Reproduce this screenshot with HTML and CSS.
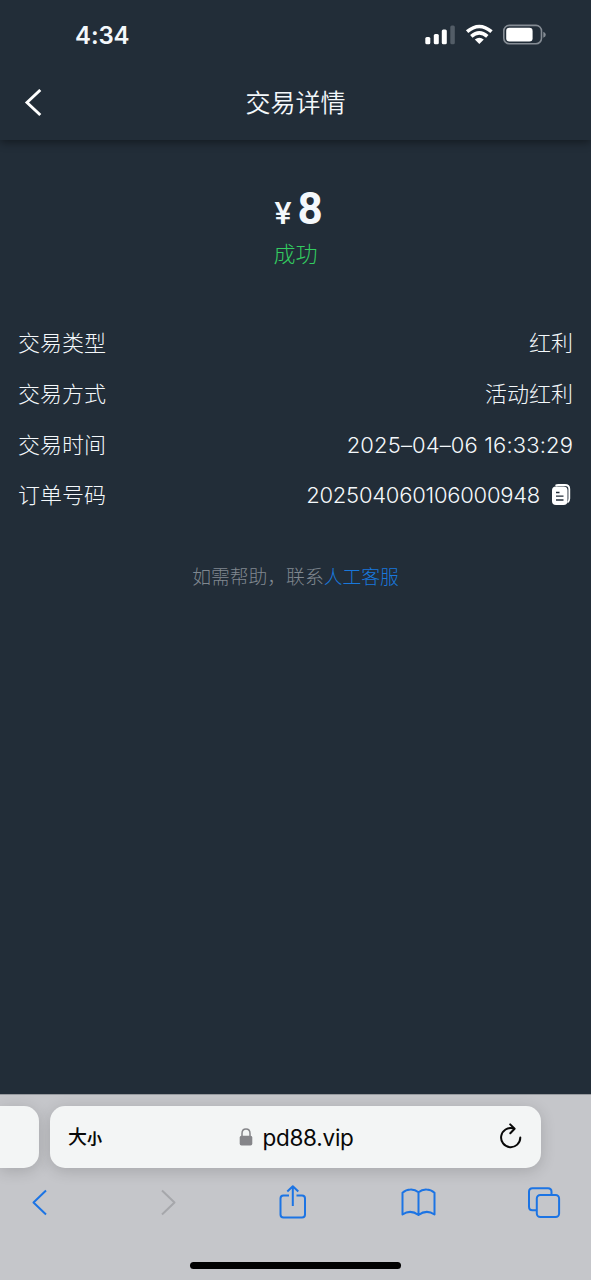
FILE: index.html
```html
<!DOCTYPE html>
<html lang="zh-CN">
<head>
<meta charset="utf-8">
<title>交易详情</title>
<link rel="stylesheet" href="styles.css">
</head>
<body>
<div class="screen">
  <header class="header">
    <div class="status">
      <span class="clock">4:34</span>
      <svg class="status-icons" width="122" height="24" viewBox="0 0 122 24">
        <g fill="#fff">
          <rect x="1.300" y="13" width="5" height="7.300" rx="1.500"/>
          <rect x="9.800" y="10" width="5" height="10.300" rx="1.500"/>
          <rect x="17.800" y="5.500" width="5" height="14.800" rx="1.500"/>
          <rect x="26.300" y="1.500" width="4.500" height="18.800" rx="1.500" fill="#535d67"/>
          <path d="M55.300 20 L50.800 15.600 Q55.300 12 59.800 15.600 Z"/>
        </g>
        <g fill="none" stroke="#fff" stroke-width="3.600">
          <path d="M43.100 7.700 Q55.300 -2.700 67.500 7.700"/>
          <path d="M47.300 12.300 Q55.300 5.300 63.300 12.300"/>
        </g>
        <rect x="79.800" y="1.400" width="37.700" height="18.400" rx="5.500" fill="none" stroke="#858c94" stroke-width="1.600"/>
        <rect x="82.200" y="3.800" width="26.400" height="13.600" rx="3.200" fill="#fff"/>
        <path d="M119.300 7.700 Q121.800 8.500 121.800 10.700 Q121.800 12.900 119.300 13.700 Z" fill="#858c94"/>
      </svg>
    </div>
    <nav class="nav">
      <svg class="back" width="18" height="28" viewBox="0 0 18 28" fill="none" stroke="#fff" stroke-width="2.900"><path d="M16.300 1 L3 13.500 L16.300 26"/></svg>
      <h1 class="title">交易详情</h1>
    </nav>
  </header>
  <main class="content">
    <div class="amount"><span class="currency">¥</span><span class="value">8</span></div>
    <div class="result">成功</div>
    <dl class="details">
      <div class="row"><dt>交易类型</dt><dd>红利</dd></div>
      <div class="row"><dt>交易方式</dt><dd>活动红利</dd></div>
      <div class="row"><dt>交易时间</dt><dd class="time">2025–04–06 16:33:29</dd></div>
      <div class="row"><dt>订单号码</dt><dd class="order"><span>202504060106000948</span>
        <svg width="19" height="22" viewBox="0 0 19 22">
          <path d="M3.500 1.700 Q4.500 1 6.500 1 H13 Q17.300 1 17.300 5 V14.500 Q17.300 17.500 15.500 18.500" fill="none" stroke="#fff" stroke-width="1.800"/>
          <rect x="0" y="2.600" width="15.500" height="18.400" rx="4" fill="#fff"/>
          <path d="M4 8.500 H7.500 M4 12.200 H11.500 M4 16 H11.500" stroke="#222c38" stroke-width="1.300"/>
        </svg></dd></div>
    </dl>
    <p class="help">如需帮助，联系<a class="link">人工客服</a></p>
  </main>
  <footer class="browser">
    <div class="tabs">
      <div class="tab-prev"></div>
      <div class="address">
        <span class="size"><b class="big">大</b><b class="small">小</b></span>
        <span class="site">
          <svg width="14" height="18" viewBox="0 0 14 18"><path d="M3 9 V5.500 Q3 1 7 1 Q11 1 11 5.500 V9" fill="none" stroke="#858589" stroke-width="1.500"/><rect x=".7" y="7.800" width="12.600" height="9.800" rx="1.800" fill="#858589"/></svg>
          <span class="domain">pd88.vip</span>
        </span>
        <svg class="reload" width="24" height="28" viewBox="0 0 24 28" fill="none" stroke="#080808" stroke-width="2" stroke-linecap="round" stroke-linejoin="round"><path d="M14.200 5.300 A9.600 9.600 0 1 0 21.300 14.500"/><path d="M11.200 1.400 L15.600 5.700 L11.300 10.200"/></svg>
      </div>
    </div>
    <div class="toolbar">
      <svg width="36" height="36" viewBox="0 0 36 36"><path d="M24 6.500 L11.500 18.500 L24 30.500"/></svg>
      <svg class="disabled" width="36" height="36" viewBox="0 0 36 36"><path d="M14 6.500 L26.500 18.500 L14 30.500"/></svg>
      <svg width="36" height="36" viewBox="0 0 36 36"><path d="M15 11.500 H9.500 Q6.500 11.500 6.500 14.500 V30.500 Q6.500 33.500 9.500 33.500 H28 Q31 33.500 31 30.500 V14.500 Q31 11.500 28 11.500 H22.500 M18.800 22 V2.500 M13.300 7.500 L18.800 2.200 L24.300 7.500"/></svg>
      <svg width="36" height="36" viewBox="0 0 36 36"><path d="M18.500 8.300 Q15 5.200 10.500 5.400 Q6 5.500 2.500 8.700 V30.500 Q10.500 25 18.500 31 Q26.500 25 34.500 30.500 V8.700 Q31 5.500 26.500 5.400 Q22 5.200 18.500 8.300 V31"/></svg>
      <svg width="36" height="36" viewBox="0 0 36 36"><rect x="10.800" y="11" width="22.300" height="22" rx="3.500"/><path d="M10.500 26.300 H6.500 Q3 26.300 3 22.800 V7.700 Q3 4.200 6.500 4.200 H22 Q25.500 4.200 25.500 7.700 V11"/></svg>
    </div>
    <div class="home"></div>
  </footer>
</div>
</body>
</html>
```
FILE: styles.css
```css
* { box-sizing: border-box; margin: 0; padding: 0; }
body { font-family: Inter, "Noto Sans CJK SC", sans-serif; background: #222d38; color: #f4f8fb; }
svg { display: block; flex: none; }
.screen { width: 591px; height: 1280px; display: flex; flex-direction: column; overflow: hidden; }
.header { height: 140px; flex: none; box-shadow: 0 2px 9px rgba(0, 0, 0, .45); }
.status { height: 70px; display: flex; justify-content: space-between; align-items: center; padding: 0 45px 0 75px; }
.clock { font-size: 24px; font-weight: 600; letter-spacing: -.1px; }
.status-icons { margin-top: 2px; }
.nav { height: 66px; display: grid; grid-template-columns: 100px 1fr 100px; align-items: center; }
.back { margin-left: 24px; }
.title { font-size: 25px; line-height: 36px; font-weight: 350; text-align: center; }
.content { flex: 1; padding: 45px 18px 0; }
.amount { height: 49px; display: flex; justify-content: center; align-items: baseline; gap: 6px; padding-left: 6px; line-height: 48px; }
.currency { font-family: Roboto, sans-serif; font-size: 32px; font-weight: 500; }
.value { font-family: Roboto, sans-serif; font-size: 44px; font-weight: 700; }
.result { color: #33cc60; font-size: 22px; line-height: 36px; text-align: center; font-weight: 300; padding-top: 2px; }
.details { margin-top: 46px; font-weight: 300; }
.row { height: 50.700px; display: flex; align-items: center; justify-content: space-between; font-size: 22px; line-height: 32px; }
.time { letter-spacing: .13px; }
.order { display: flex; align-items: center; gap: 12px; padding-right: 2px; letter-spacing: -.25px; }
.help { margin-top: 42px; text-align: center; font-size: 18.800px; line-height: 30px; font-weight: 300; color: #808890; }
.link { color: #1978dc; }
.browser { height: 186px; flex: none; background: #c5c6ca; border-top: 1px solid #96999e; padding-top: 11px; }
.tabs { display: flex; gap: 11px; height: 62px; }
.tab-prev, .address { background: #f3f5f5; box-shadow: 0 3px 15px rgba(0, 0, 0, .16); }
.tab-prev { width: 39px; border-radius: 0 15px 15px 0; }
.address { width: 491px; border-radius: 15px; display: grid; grid-template-columns: 100px 1fr 100px; align-items: center; padding: 0 18px; color: #080808; }
.size { display: flex; align-items: baseline; line-height: 28px; padding-top: 3px; }
.size b { font-weight: 500; }
.big { font-size: 19px; }
.size .small { font-size: 15px; font-weight: 700; }
.site { display: flex; align-items: center; justify-content: center; gap: 9px; padding-left: 2px; }
.domain { font-size: 22.500px; letter-spacing: -.25px; }
.reload { justify-self: end; }
.toolbar { height: 70px; display: flex; justify-content: space-between; padding: 16px 29px 0 22px; }
.toolbar svg { fill: none; stroke: #1c74e4; stroke-width: 2; stroke-linejoin: round; }
.toolbar .disabled { stroke: #a6a7ab; }
.home { width: 211px; height: 7px; border-radius: 4px; background: #000; margin: 24px auto 0; }
```
